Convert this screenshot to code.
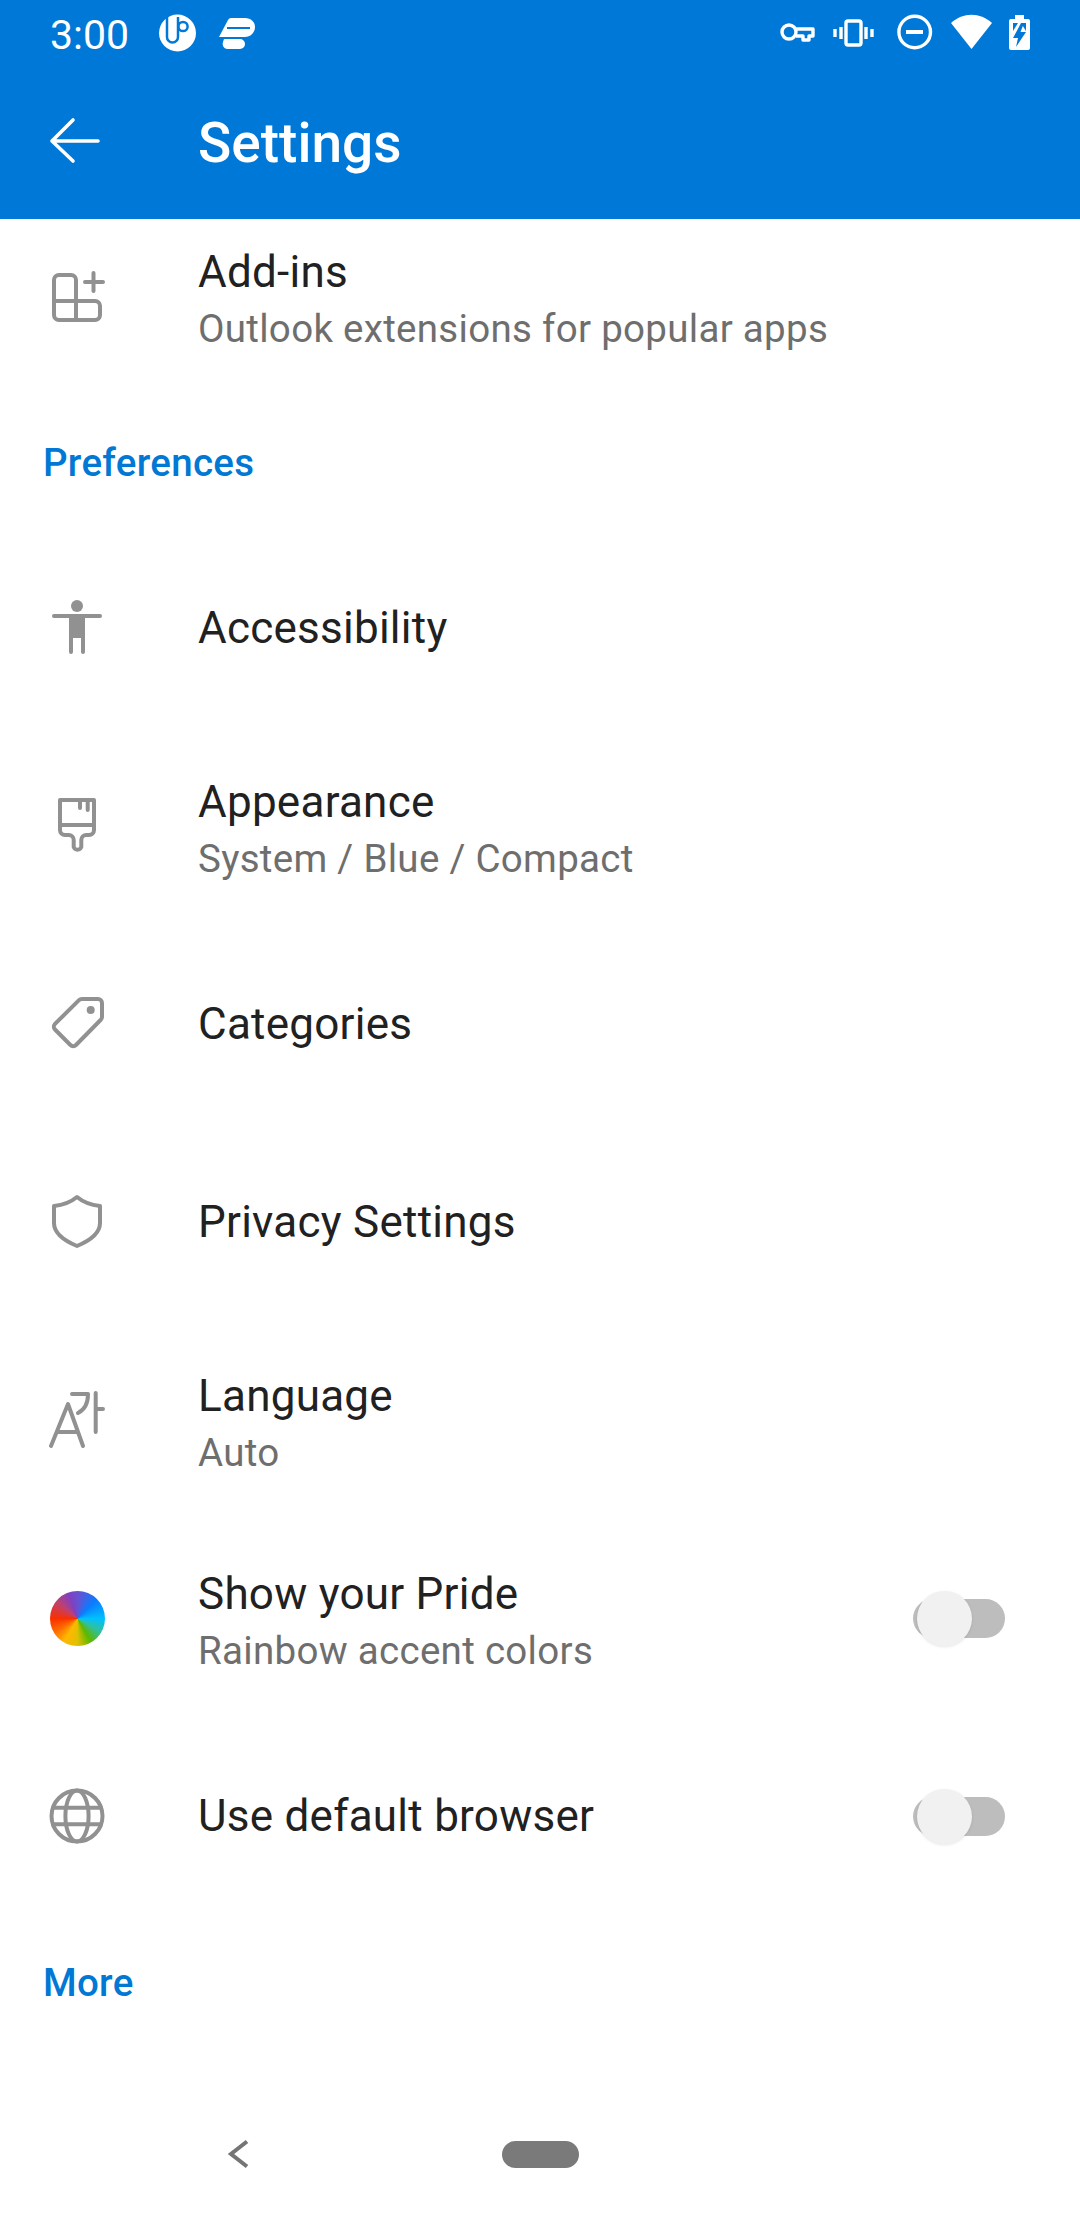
<div class="screen">
    <header class="header">
        <div class="status">
            <span class="time">3:00</span>
            <svg class="status-left" width="110" height="63" viewBox="155 0 110 63">
                <circle cx="177.5" cy="33" r="18.5" fill="#fff" />
                <path d="M167 17 V37 a5.5 5.5 0 0 0 11 0 V17" fill="none" stroke="#0078d7" stroke-width="2.5" />
                <circle cx="183" cy="26.5" r="4.6" fill="none" stroke="#0078d7" stroke-width="2.5" />
                <path d="M219 37 L228 20 a4 4 0 0 1 3-2 H245 C251 18 255 22 255 27 C255 33 250 37 245 37 Z" fill="#fff" />
                <path d="M227 28 H250" stroke="#0078d7" stroke-width="2" />
                <path d="M224 39 H240 a5 5 0 0 1 0 10 H227 a5 5 0 0 1-4-7 Z" fill="#fff" />
            </svg>
            <svg class="status-right" width="250" height="63" viewBox="780 0 250 63">
                <g fill="none" stroke="#fff" stroke-width="3.4">
                    <circle cx="789" cy="32" r="7" />
                    <path d="M796 29 H813 V36 H809 V40 H803 V36 H796" stroke-linejoin="round" />
                    <rect x="846" y="21" width="15" height="24" rx="2" />
                    <path d="M841 27 V39 M835 29 V37 M866 27 V39 M872 29 V37" />
                    <circle cx="914.7" cy="32" r="15.8" />
                    <path d="M906 32 H923" stroke-width="4" />
                </g>
                <path d="M951 23 C963 12 980 12 992 23 L971.5 49 Z" fill="#fff" />
                <path d="M1015 15 H1024 V19 H1028 a2 2 0 0 1 2 2 V48 a2 2 0 0 1-2 2 H1011 a2 2 0 0 1-2-2 V21 a2 2 0 0 1 2-2 H1015 Z" fill="#fff" />
                <path d="M1013 23 H1018 L1013 31 Z M1021 23 H1026 V31 Z" fill="#0078d7" />
                <path d="M1021 23 L1013 38 H1018 L1016 47 L1026 32 H1020.5 L1024 23 Z" fill="#0078d7" />
            </svg>
        </div>
        <div class="toolbar">
            <svg class="back" width="80" height="60" viewBox="37 113 80 60">
                <path d="M98 143 H52 M73 122 L52 143 L73 163" fill="none" stroke="#fff" stroke-width="3.6" stroke-linecap="round" stroke-linejoin="round" />
            </svg>
            <span class="page-title">Settings</span>
        </div>
    </header>

    <main class="list">
        <div class="row first">
            <svg class="icon" viewBox="0 0 80 80">
                <path d="M39 45 V24 a5 5 0 0 0-5-5 H22 a5 5 0 0 0-5 5 V59 a5 5 0 0 0 5 5 H58 a5 5 0 0 0 5-5 V50 a5 5 0 0 0-5-5 H17 M39 45 V64 M48 26 H66 M56.5 17 V35" />
            </svg>
            <div class="text two">
                <div class="title">Add-ins</div>
                <div class="sub">Outlook extensions for popular apps</div>
            </div>
        </div>

        <div class="section">Preferences</div>

        <div class="row">
            <svg class="icon" viewBox="0 0 80 80">
                <circle class="solid" cx="40" cy="18" r="6" />
                <path d="M17 28 H63" />
                <path class="solid" d="M32 28 H48 V64 a2 2 0 0 1-4 0 V50 H36 V64 a2 2 0 0 1-4 0 Z" />
            </svg>
            <div class="text"><div class="title">Accessibility</div></div>
        </div>

        <div class="row">
            <svg class="icon" viewBox="0 0 80 80">
                <path d="M23 14 H57 V44 a5 5 0 0 1-5 5 H49.3 a5 5 0 0 0-5 5 V61 a4 4 0 0 1-7.6 0 V54 a5 5 0 0 0-5-5 H28 a5 5 0 0 1-5-5 Z M23 39 H57 M43 14 V22 M50.7 14 V24" />
            </svg>
            <div class="text two">
                <div class="title">Appearance</div>
                <div class="sub">System / Blue / Compact</div>
            </div>
        </div>

        <div class="row">
            <svg class="icon" viewBox="0 0 80 80">
                <path d="M45 15 H61 a4 4 0 0 1 4 4 V33 a4 4 0 0 1-1.2 2.8 L39 61 a4 4 0 0 1-5.6 0 L18 45.5 a4 4 0 0 1 0-5.6 L42 16.2 a4 4 0 0 1 3-1.2 Z" />
                <circle class="solid" cx="53.7" cy="26" r="4" />
            </svg>
            <div class="text"><div class="title">Categories</div></div>
        </div>

        <div class="row">
            <svg class="icon" viewBox="0 0 80 80">
                <path d="M40 15 C46 20 54 23 63 24 V41 C63 51 52 59 40 64 C28 59 17 51 17 41 V24 C26 23 34 20 40 15 Z" />
            </svg>
            <div class="text"><div class="title">Privacy Settings</div></div>
        </div>

        <div class="row">
            <svg class="icon" viewBox="0 0 80 80">
                <path d="M14 66 L31 24 L46 66 M20 52 H41 M35 14 H51 C51 23 47 30 41 33 M58.7 13 V52 M59 29 H66" />
            </svg>
            <div class="text two">
                <div class="title">Language</div>
                <div class="sub">Auto</div>
            </div>
        </div>

        <div class="row">
            <div class="icon-box"><span class="rainbow"></span></div>
            <div class="text two">
                <div class="title">Show your Pride</div>
                <div class="sub">Rainbow accent colors</div>
            </div>
            <div class="toggle"><span class="thumb"></span></div>
        </div>

        <div class="row">
            <svg class="icon" viewBox="0 0 80 80">
                <circle cx="40" cy="40" r="25.5" />
                <ellipse cx="40" cy="40" rx="11.6" ry="25.5" />
                <path d="M16 31.7 H64 M16 48.3 H64" />
            </svg>
            <div class="text"><div class="title">Use default browser</div></div>
            <div class="toggle"><span class="thumb"></span></div>
        </div>

        <div class="section">More</div>
    </main>

    <nav class="nav">
        <svg class="nav-back" width="26" height="32" viewBox="0 0 26 32">
            <path d="M22 3.5 L6 16 L22 28.5" fill="none" stroke="#757575" stroke-width="4" />
        </svg>
        <span class="home"></span>
    </nav>
</div>

<style>
    :global(body) {
        background: #fff;
    }
    .screen {
        width: 1080px;
        height: 2220px;
        display: flex;
        flex-direction: column;
        overflow: hidden;
        font-family: Roboto, "Liberation Sans", sans-serif;
        background: #fff;
    }
    .header {
        height: 219px;
        flex: none;
        background: #0078d7;
        color: #fff;
    }
    .status {
        height: 63px;
        display: flex;
        align-items: center;
        padding: 0 50px;
    }
    .time {
        font-size: 41px;
        width: 105px;
        padding-top: 6px;
    }
    .status-left {
        display: block;
    }
    .status-right {
        display: block;
        margin-left: auto;
    }
    .toolbar {
        height: 156px;
        display: flex;
        align-items: center;
        padding-left: 37px;
    }
    .back {
        display: block;
        margin-right: 81px;
    }
    .page-title {
        font-size: 55px;
        font-weight: 500;
        padding-top: 4px;
    }
    .list {
        flex: 1;
        overflow: hidden;
    }
    .row {
        height: 198px;
        display: flex;
        align-items: center;
        padding-left: 37px;
    }
    .first {
        margin-top: -22px;
    }
    .icon,
    .icon-box {
        width: 80px;
        height: 80px;
        flex: none;
        margin-right: 81px;
    }
    .icon {
        fill: none;
        stroke: #919191;
        stroke-width: 4;
        stroke-linecap: round;
        stroke-linejoin: round;
    }
    .icon .solid {
        fill: #919191;
        stroke: none;
    }
    .icon-box {
        display: flex;
        align-items: center;
        justify-content: center;
    }
    .rainbow {
        width: 55px;
        height: 55px;
        border-radius: 50%;
        background: conic-gradient(#6a50d0, #0a7cff 45deg, #00c0ff 90deg, #30c0a0 120deg, #5cb800 150deg, #e0c000 180deg, #ffb800 210deg, #ff6a00 240deg, #f83000 270deg, #c04070 310deg, #8040c0 340deg, #6a50d0);
    }
    .text {
        flex: 1;
    }
    .text.two {
        padding-top: 8px;
    }
    .title {
        font-size: 44px;
        line-height: 57px;
        letter-spacing: 0.25px;
        color: #212121;
    }
    .sub {
        font-size: 38.5px;
        line-height: 56px;
        letter-spacing: 0.3px;
        color: #6e6e6e;
    }
    .section {
        height: 134px;
        display: flex;
        align-items: center;
        padding-left: 43px;
        font-size: 38.5px;
        letter-spacing: 0.3px;
        font-weight: 500;
        color: #0078d4;
    }
    .toggle {
        width: 92px;
        height: 39px;
        flex: none;
        margin-right: 75px;
        border-radius: 20px;
        background: #bdbdbd;
        position: relative;
    }
    .thumb {
        position: absolute;
        left: 4px;
        top: -8px;
        width: 55px;
        height: 55px;
        border-radius: 50%;
        background: #f1f1f1;
        box-shadow: 0 1px 3px rgba(0, 0, 0, 0.1);
    }
    .nav {
        height: 132px;
        flex: none;
        display: flex;
        align-items: center;
        padding-left: 225px;
    }
    .nav-back {
        display: block;
    }
    .home {
        width: 77px;
        height: 27px;
        margin-left: 251px;
        border-radius: 14px;
        background: #7a7a7a;
    }
</style>
